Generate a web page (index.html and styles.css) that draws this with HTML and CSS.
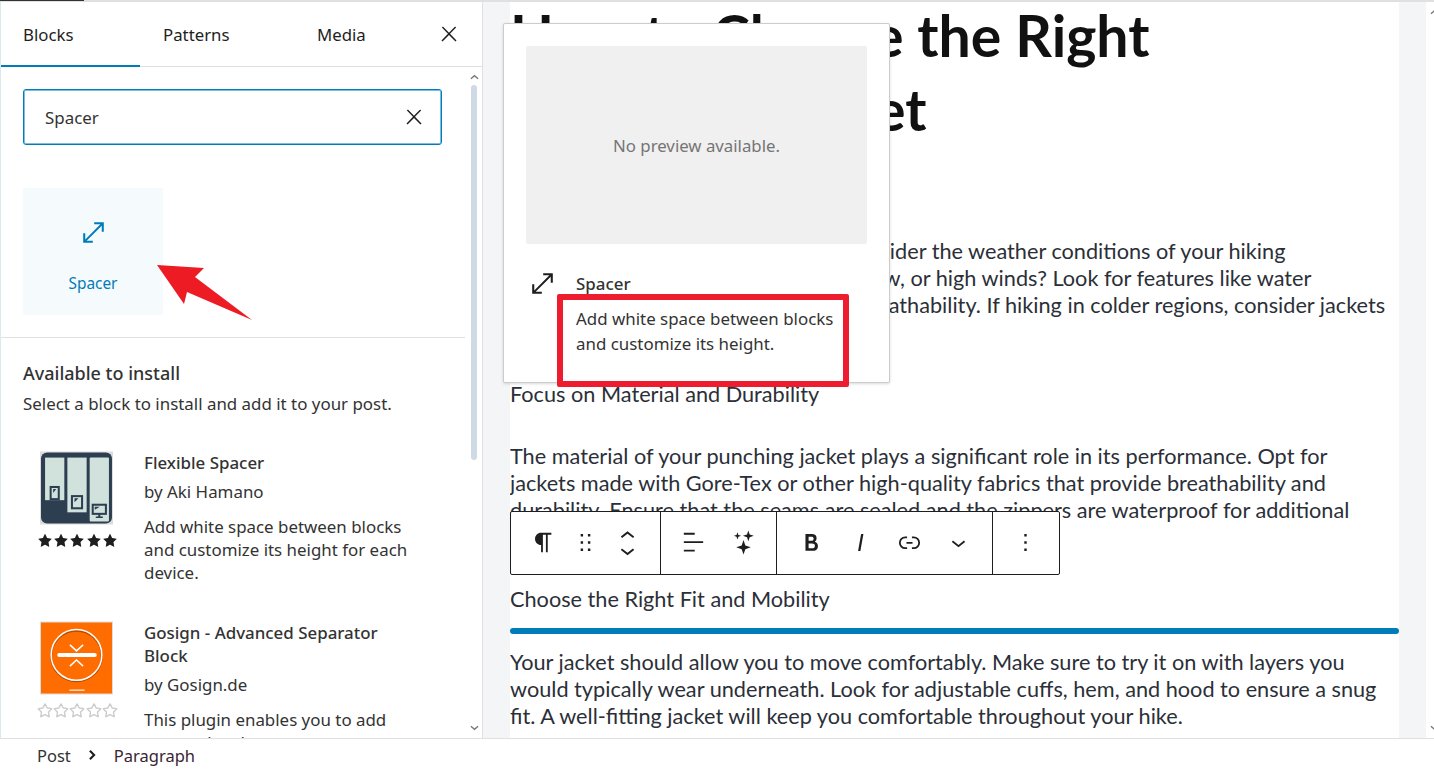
FILE: index.html
```html
<!DOCTYPE html>
<html lang="en">
<head>
    <meta charset="UTF-8">
    <meta name="viewport" content="width=device-width, initial-scale=1.0">
    <title>Edit Post</title>
    <link rel="stylesheet" href="styles.css">
</head>
<body>
    <div class="top-line"><div class="top-line-dark"></div></div>

    <div class="workspace">
        <aside class="sidebar">
            <div class="tabs">
                <div class="tab tab-blocks active">Blocks</div>
                <div class="tab tab-patterns">Patterns</div>
                <div class="tab tab-media">Media</div>
                <svg class="tabs-close" viewBox="0 0 24 24"><path d="M13 11.8l6.1-6.3-1-1-6.1 6.2-6.1-6.2-1 1 6.1 6.3-6.5 6.7 1 1 6.5-6.6 6.5 6.6 1-1z"/></svg>
            </div>

            <div class="sidebar-body">
                <div class="panel">
                    <div class="search">
                        <span>Spacer</span>
                        <svg class="search-close" viewBox="0 0 24 24"><path d="M13 11.8l6.1-6.3-1-1-6.1 6.2-6.1-6.2-1 1 6.1 6.3-6.5 6.7 1 1 6.5-6.6 6.5 6.6 1-1z"/></svg>
                    </div>

                    <div class="block-result">
                        <svg class="block-result-icon" viewBox="0 0 24 24"><path d="M7 18h4.5v1.5h-7v-7H6V17L17 6h-4.5V4.5h7v7H18V7L7 18Z"/></svg>
                        <div>Spacer</div>
                    </div>

                    <div class="install">
                        <h2>Available to install</h2>
                        <p class="install-hint">Select a block to install and add it to your post.</p>

                        <div class="plugin">
                            <div class="plugin-side">
                                <svg class="plugin-icon" viewBox="0 0 72 72">
                                    <rect width="72" height="72" fill="#dcdcdc"/>
                                    <rect x="1" y="1" width="70" height="70" rx="6" fill="#2c3e50"/>
                                    <rect x="5" y="6" width="19" height="42" fill="#d1e2dc"/>
                                    <rect x="27" y="6" width="19" height="54" fill="#d1e2dc"/>
                                    <rect x="49" y="6" width="19" height="63" rx="1" fill="#d1e2dc"/>
                                    <rect x="10.500" y="35" width="8" height="12" fill="#d1e2dc" stroke="#2c3e50" stroke-width="2"/>
                                    <path d="M13 37h3l-3 4z" fill="#2c3e50"/>
                                    <rect x="31.500" y="44" width="10" height="12" fill="#d1e2dc" stroke="#2c3e50" stroke-width="2"/>
                                    <path d="M34 46h4l-4 4z" fill="#2c3e50"/>
                                    <rect x="52" y="52.500" width="13" height="9" fill="#d1e2dc" stroke="#2c3e50" stroke-width="2"/>
                                    <path d="M54 54.500h5l-5 3z" fill="#2c3e50"/>
                                    <path d="M57.500 62h2v2h2.500v1.500h-7V64h2.500z" fill="#2c3e50"/>
                                </svg>
                                <div class="stars">
                                    <svg viewBox="0 0 24 24"><path class="star" d="M11.776 4.454a.25.25 0 01.448 0l2.069 4.192a.25.25 0 00.188.137l4.626.672a.25.25 0 01.139.426l-3.348 3.263a.25.25 0 00-.072.222l.79 4.607a.25.25 0 01-.362.263l-4.138-2.175a.25.25 0 00-.232 0l-4.138 2.175a.25.25 0 01-.363-.263l.79-4.607a.25.25 0 00-.071-.222L4.754 9.881a.25.25 0 01.139-.426l4.626-.672a.25.25 0 00.188-.137l2.069-4.192z"/></svg>
                                    <svg viewBox="0 0 24 24"><path class="star" d="M11.776 4.454a.25.25 0 01.448 0l2.069 4.192a.25.25 0 00.188.137l4.626.672a.25.25 0 01.139.426l-3.348 3.263a.25.25 0 00-.072.222l.79 4.607a.25.25 0 01-.362.263l-4.138-2.175a.25.25 0 00-.232 0l-4.138 2.175a.25.25 0 01-.363-.263l.79-4.607a.25.25 0 00-.071-.222L4.754 9.881a.25.25 0 01.139-.426l4.626-.672a.25.25 0 00.188-.137l2.069-4.192z"/></svg>
                                    <svg viewBox="0 0 24 24"><path class="star" d="M11.776 4.454a.25.25 0 01.448 0l2.069 4.192a.25.25 0 00.188.137l4.626.672a.25.25 0 01.139.426l-3.348 3.263a.25.25 0 00-.072.222l.79 4.607a.25.25 0 01-.362.263l-4.138-2.175a.25.25 0 00-.232 0l-4.138 2.175a.25.25 0 01-.363-.263l.79-4.607a.25.25 0 00-.071-.222L4.754 9.881a.25.25 0 01.139-.426l4.626-.672a.25.25 0 00.188-.137l2.069-4.192z"/></svg>
                                    <svg viewBox="0 0 24 24"><path class="star" d="M11.776 4.454a.25.25 0 01.448 0l2.069 4.192a.25.25 0 00.188.137l4.626.672a.25.25 0 01.139.426l-3.348 3.263a.25.25 0 00-.072.222l.79 4.607a.25.25 0 01-.362.263l-4.138-2.175a.25.25 0 00-.232 0l-4.138 2.175a.25.25 0 01-.363-.263l.79-4.607a.25.25 0 00-.071-.222L4.754 9.881a.25.25 0 01.139-.426l4.626-.672a.25.25 0 00.188-.137l2.069-4.192z"/></svg>
                                    <svg viewBox="0 0 24 24"><path class="star" d="M11.776 4.454a.25.25 0 01.448 0l2.069 4.192a.25.25 0 00.188.137l4.626.672a.25.25 0 01.139.426l-3.348 3.263a.25.25 0 00-.072.222l.79 4.607a.25.25 0 01-.362.263l-4.138-2.175a.25.25 0 00-.232 0l-4.138 2.175a.25.25 0 01-.363-.263l.79-4.607a.25.25 0 00-.071-.222L4.754 9.881a.25.25 0 01.139-.426l4.626-.672a.25.25 0 00.188-.137l2.069-4.192z"/></svg>
                                </div>
                            </div>
                            <div class="plugin-info">
                                <div class="plugin-title">Flexible Spacer</div>
                                <div class="plugin-author">by Aki Hamano</div>
                                <div class="plugin-desc">Add white space between blocks and customize its height for each device.</div>
                            </div>
                        </div>

                        <div class="plugin">
                            <div class="plugin-side">
                                <svg class="plugin-icon" viewBox="0 0 72 72">
                                    <rect width="72" height="72" fill="#dcdcdc"/>
                                    <rect x="1" y="1" width="70" height="70" fill="#ff6c00"/>
                                    <circle cx="36" cy="34" r="25" fill="none" stroke="#b84e00" stroke-width="2"/>
                                    <circle cx="36" cy="33" r="25" fill="none" stroke="#fff" stroke-width="1.500"/>
                                    <rect x="17" y="31" width="39" height="4" rx="2" fill="#fff"/>
                                    <path d="M29.500 23l6.500 6 6.500-6M29.500 44l6.500-6 6.500 6" fill="none" stroke="#fff" stroke-width="1.500"/>
                                    <rect x="29" y="67" width="15" height="1.500" fill="#ffd9bd"/>
                                </svg>
                                <div class="stars stars-empty">
                                    <svg viewBox="0 0 24 24"><path class="star" d="M11.776 4.454a.25.25 0 01.448 0l2.069 4.192a.25.25 0 00.188.137l4.626.672a.25.25 0 01.139.426l-3.348 3.263a.25.25 0 00-.072.222l.79 4.607a.25.25 0 01-.362.263l-4.138-2.175a.25.25 0 00-.232 0l-4.138 2.175a.25.25 0 01-.363-.263l.79-4.607a.25.25 0 00-.071-.222L4.754 9.881a.25.25 0 01.139-.426l4.626-.672a.25.25 0 00.188-.137l2.069-4.192z"/></svg>
                                    <svg viewBox="0 0 24 24"><path class="star" d="M11.776 4.454a.25.25 0 01.448 0l2.069 4.192a.25.25 0 00.188.137l4.626.672a.25.25 0 01.139.426l-3.348 3.263a.25.25 0 00-.072.222l.79 4.607a.25.25 0 01-.362.263l-4.138-2.175a.25.25 0 00-.232 0l-4.138 2.175a.25.25 0 01-.363-.263l.79-4.607a.25.25 0 00-.071-.222L4.754 9.881a.25.25 0 01.139-.426l4.626-.672a.25.25 0 00.188-.137l2.069-4.192z"/></svg>
                                    <svg viewBox="0 0 24 24"><path class="star" d="M11.776 4.454a.25.25 0 01.448 0l2.069 4.192a.25.25 0 00.188.137l4.626.672a.25.25 0 01.139.426l-3.348 3.263a.25.25 0 00-.072.222l.79 4.607a.25.25 0 01-.362.263l-4.138-2.175a.25.25 0 00-.232 0l-4.138 2.175a.25.25 0 01-.363-.263l.79-4.607a.25.25 0 00-.071-.222L4.754 9.881a.25.25 0 01.139-.426l4.626-.672a.25.25 0 00.188-.137l2.069-4.192z"/></svg>
                                    <svg viewBox="0 0 24 24"><path class="star" d="M11.776 4.454a.25.25 0 01.448 0l2.069 4.192a.25.25 0 00.188.137l4.626.672a.25.25 0 01.139.426l-3.348 3.263a.25.25 0 00-.072.222l.79 4.607a.25.25 0 01-.362.263l-4.138-2.175a.25.25 0 00-.232 0l-4.138 2.175a.25.25 0 01-.363-.263l.79-4.607a.25.25 0 00-.071-.222L4.754 9.881a.25.25 0 01.139-.426l4.626-.672a.25.25 0 00.188-.137l2.069-4.192z"/></svg>
                                    <svg viewBox="0 0 24 24"><path class="star" d="M11.776 4.454a.25.25 0 01.448 0l2.069 4.192a.25.25 0 00.188.137l4.626.672a.25.25 0 01.139.426l-3.348 3.263a.25.25 0 00-.072.222l.79 4.607a.25.25 0 01-.362.263l-4.138-2.175a.25.25 0 00-.232 0l-4.138 2.175a.25.25 0 01-.363-.263l.79-4.607a.25.25 0 00-.071-.222L4.754 9.881a.25.25 0 01.139-.426l4.626-.672a.25.25 0 00.188-.137l2.069-4.192z"/></svg>
                                </div>
                            </div>
                            <div class="plugin-info">
                                <div class="plugin-title">Gosign - Advanced Separator Block</div>
                                <div class="plugin-author">by Gosign.de</div>
                                <div class="plugin-desc">This plugin enables you to add custom borders or separators between blocks.</div>
                            </div>
                        </div>
                    </div>
                </div>

                <div class="scrollbar">
                    <svg class="scroll-arrow" viewBox="0 0 10 6"><path d="M1 5l4-3.500L9 5"/></svg>
                    <div class="scroll-track"><div class="scroll-thumb"></div></div>
                    <svg class="scroll-arrow" viewBox="0 0 10 6"><path d="M1 1l4 3.500L9 1"/></svg>
                </div>
            </div>
        </aside>

        <main class="editor">
            <div class="canvas">
                <h1>How to Choose the Right<br><span class="title-second">Punching Jacket</span></h1>
                <p>When wearing a jacket, you should consider the weather conditions of your hiking<br>
                destination. Will there be hard rain, snow, or high winds? Look for features like water<br>
                resistance, nice insulation, and great breathability. If hiking in colder regions, consider jackets<br>
                with extra insulation.</p>
                <p>Focus on Material and Durability</p>
                <p>The material of your punching jacket plays a significant role in its performance. Opt for<br>
                jackets made with Gore-Tex or other high-quality fabrics that provide breathability and<br>
                durability. Ensure that the seams are sealed and the zippers are waterproof for additional<br>
                protection.</p>
                <p class="before-bar">Choose the Right Fit and Mobility</p>
                <div class="bar"></div>
                <p>Your jacket should allow you to move comfortably. Make sure to try it on with layers you<br>
                would typically wear underneath. Look for adjustable cuffs, hem, and hood to ensure a snug<br>
                fit. A well-fitting jacket will keep you comfortable throughout your hike.</p>
            </div>
            <div class="editor-scrollbar">
                <svg class="scroll-arrow" viewBox="0 0 10 6"><path d="M1 5l4-3.500L9 5"/></svg>
                <svg class="scroll-arrow" viewBox="0 0 10 6"><path d="M1 1l4 3.500L9 1"/></svg>
            </div>

            <div class="toolbar">
                <div class="tool-group group-block">
                    <svg class="tool-icon" viewBox="0 0 24 24"><path d="m9.99609 14v-.2251l.00391.0001v6.225h1.5v-14.5h2.5v14.5h1.5v-14.5h3v-1.5h-8.50391c-2.76142 0-5 2.23858-5 5 0 2.7614 2.23858 5 5 5z"/></svg>
                    <svg class="tool-icon" viewBox="0 0 24 24"><path d="M8 7h2V5H8v2zm0 6h2v-2H8v2zm0 6h2v-2H8v2zm6-14v2h2V5h-2zm0 8h2v-2h-2v2zm0 6h2v-2h-2v2z"/></svg>
                    <div class="movers">
                        <svg viewBox="0 0 24 12"><path d="M6.500 10.400L12 6l5.500 4.400-.9 1.200L12 8l-4.500 3.600-1-1.200z"/></svg>
                        <svg viewBox="0 0 24 12"><path d="M17.500 1.600L12 6 6.500 1.600l.9-1.200L12 4l4.500-3.600 1 1.200z"/></svg>
                    </div>
                </div>
                <div class="tool-group group-align">
                    <svg class="tool-icon" viewBox="0 0 24 24"><path d="M13 5.500H4V4h9v1.500Zm7 7H4V11h16v1.500Zm-7 7H4V18h9v1.500Z"/></svg>
                    <svg class="tool-icon" viewBox="0 0 24 24"><path d="M16 3l1.100 3.400L20.500 7.500l-3.400 1.100L16 12l-1.100-3.400-3.400-1.100 3.400-1.100zM7 4.500l.8 2.200 2.200.8-2.200.8L7 10.500l-.8-2.200-2.200-.8 2.200-.8zM12 11l1.500 4.500L18 17l-4.500 1.500L12 23l-1.500-4.500L6 17l4.500-1.500z" transform="translate(0 -1)"/></svg>
                </div>
                <div class="tool-group group-format">
                    <svg class="tool-icon" viewBox="0 0 24 24"><path d="M14.700 11.300c1-.6 1.500-1.600 1.500-3 0-2.300-1.300-3.400-4-3.400H7v14h5.800c1.400 0 2.500-.3 3.300-1 .8-.7 1.200-1.700 1.200-2.900.1-1.900-.8-3.100-2.600-3.700zm-5.100-4h2.300c.6 0 1.100.1 1.400.4.3.3.5.7.5 1.200s-.2 1-.5 1.200c-.3.3-.8.4-1.400.4H9.600V7.300zm4.600 9c-.4.3-1 .4-1.700.4H9.600v-3.900h2.900c.7 0 1.300.2 1.700.5.4.3.6.8.6 1.500s-.2 1.200-.6 1.500z"/></svg>
                    <svg class="tool-icon" viewBox="0 0 24 24"><path d="M12.500 5L10 19h1.900l2.500-14z"/></svg>
                    <svg class="tool-icon" viewBox="0 0 24 24"><path d="M10 17.389H8.444A5.194 5.194 0 1 1 8.444 7H10v1.500H8.444a3.694 3.694 0 0 0 0 7.389H10v1.500ZM14 7h1.556a5.194 5.194 0 0 1 0 10.390H14v-1.500h1.556a3.694 3.694 0 0 0 0-7.390H14V7Zm-4.500 6h5v-1.500h-5V13Z"/></svg>
                    <svg class="tool-icon" viewBox="0 0 24 24"><path d="M17.500 11.600L12 16l-5.500-4.400.9-1.200L12 14l4.500-3.600 1 1.200z"/></svg>
                </div>
                <div class="tool-group group-more">
                    <svg class="tool-icon" viewBox="0 0 24 24"><path d="M13 19h-2v-2h2v2zm0-6h-2v-2h2v2zm0-6h-2V5h2v2z"/></svg>
                </div>
            </div>
        </main>
    </div>

    <footer class="statusbar">
        <span>Post</span>
        <svg class="crumb-sep" viewBox="0 0 20 20"><path d="M7 4l6 6-6 6"/></svg>
        <span class="crumb-current">Paragraph</span>
    </footer>

    <div class="preview-pop">
        <div class="preview-box">No preview available.</div>
        <div class="preview-card">
            <svg class="preview-icon" viewBox="0 0 24 24"><path d="M7 18h4.500v1.500h-7v-7H6V17L17 6h-4.500V4.500h7v7H18V7L7 18Z"/></svg>
            <div>
                <div class="preview-title">Spacer</div>
                <div class="preview-desc">Add white space between blocks and customize its height.</div>
            </div>
        </div>
    </div>

    <!-- annotations on top of the screenshot -->
    <div class="red-box"></div>
    <svg class="red-arrow" viewBox="0 0 110 70"><polygon points="2,2 49,5 40,14 97,57 32,29 29,41"/></svg>
</body>
</html>
```

FILE: styles.css
```css
* {
    box-sizing: border-box;
}

html, body {
    height: 100%;
}

body {
    margin: 0;
    display: flex;
    flex-direction: column;
    height: 772px;
    overflow: hidden;
    position: relative;
    font-family: "Noto Sans", sans-serif;
    font-size: 16.900px;
    color: #333;
    background: #fff;
}

svg {
    display: block;
    flex: none;
}

.top-line {
    height: 2px;
    background: #e0e0e0;
    flex: none;
}

.top-line-dark {
    width: 84px;
    height: 1px;
    background: #333;
}

.workspace {
    flex: 1;
    display: flex;
    min-height: 0;
}

/* sidebar */
.sidebar {
    width: 483px;
    flex: none;
    display: flex;
    flex-direction: column;
    border-right: 1px solid #e0e0e0;
    border-left: 1px solid #dfe7ee;
}

.tabs {
    height: 65px;
    flex: none;
    display: flex;
    align-items: center;
    position: relative;
    border-bottom: 1px solid #e0e0e0;
    font-size: 16.800px;
    color: #1e1e1e;
}

.tab {
    height: 65px;
    line-height: 66px;
    padding-left: 22px;
    flex: none;
}

.tab-blocks {
    width: 139px;
    border-bottom: 2px solid #007cba;
}

.tab-patterns {
    width: 154px;
    padding-left: 23px;
}

.tab-media {
    padding-left: 23px;
}

.tabs-close {
    width: 24px;
    height: 24px;
    margin-left: auto;
    margin-right: 21px;
    fill: #1e1e1e;
}

.sidebar-body {
    flex: 1;
    display: flex;
    min-height: 0;
}

.panel {
    width: 464px;
    flex: none;
    overflow: hidden;
}

.search {
    margin: 22px 0 0 22px;
    width: 419px;
    height: 56px;
    display: flex;
    align-items: center;
    justify-content: space-between;
    padding: 1px 15px 0 21px;
    border: 1px solid #007cba;
    border-radius: 3px;
    box-shadow: inset 0 0 0 1px rgba(0, 124, 186, 0.5);
}

.search-close {
    width: 24px;
    height: 24px;
    margin-top: -1px;
    fill: #1e1e1e;
}

.block-result {
    width: 140px;
    height: 127px;
    margin: 43px 0 22px 22px;
    padding-top: 28px;
    background: #f5fafd;
    border-radius: 2px;
    font-size: 15.400px;
    color: #007cba;
    text-align: center;
}

.block-result-icon {
    width: 33px;
    height: 33px;
    margin: 0 auto 24px;
    fill: #007cba;
}

.install {
    border-top: 1px solid #e0e0e0;
    padding: 23px 22px 0;
}

.install h2 {
    margin: 0;
    font-size: 18px;
    line-height: 25px;
    font-weight: 500;
    color: #333;
}

.install-hint {
    margin: 5px 0 0;
    line-height: 25px;
}

.plugin {
    display: flex;
    margin-top: 35px;
    margin-bottom: 37px;
}

.plugin:last-child {
    margin-bottom: 0;
}

.plugin-side {
    width: 121px;
    flex: none;
    padding-left: 17px;
}

.plugin-icon {
    width: 73px;
    height: 74px;
}

.stars {
    display: flex;
    margin: 5px 0 0 -6px;
    width: 84px;
}

.stars svg {
    width: 22px;
    height: 22px;
    margin-right: -5.800px;
}

.star {
    fill: #1e1e1e;
}

.stars-empty .star {
    fill: #fff;
    stroke: #ccc;
    stroke-width: 1.500;
}

.plugin-info {
    width: 270px;
    line-height: 23px;
}

.plugin-title {
    font-weight: 500;
}

.plugin-author {
    margin-top: 6px;
}

.plugin-desc {
    margin-top: 12px;
}

.scrollbar {
    width: 18px;
    flex: none;
    display: flex;
    flex-direction: column;
    align-items: center;
    padding: 7px 0 7px;
}

.scroll-arrow {
    width: 9px;
    height: 6px;
    fill: none;
    stroke: #777;
    stroke-width: 1.500;
}

.scroll-track {
    flex: 1;
    width: 6px;
    padding-top: 5px;
}

.scroll-thumb {
    height: 375px;
    border-radius: 3px;
    background: #cfdae4;
}

/* editor */
.editor {
    flex: 1;
    min-width: 0;
    display: flex;
    position: relative;
    background: #f4f5f7;
    padding-left: 27px;
    overflow: hidden;
}

.canvas {
    width: 889px;
    flex: none;
    height: 100%;
    overflow: hidden;
    background: #fff;
    font-family: Lato, sans-serif;
    font-size: 21.700px;
    line-height: 27px;
    color: #2b2f38;
}

.canvas h1 {
    margin: -4px 0 92px;
    font-size: 57.200px;
    line-height: 74px;
    font-weight: 700;
    color: #111;
}

.title-second {
    word-spacing: 7px;
}

.canvas p {
    margin: 0 0 35px;
    white-space: nowrap;
}

.canvas p.before-bar {
    margin-bottom: 15px;
}

.bar {
    height: 6px;
    margin-bottom: 15px;
    border-radius: 3px;
    background: #007cba;
}

.editor-scrollbar {
    margin-left: 27px;
    flex: 1;
    background: #fff;
    display: flex;
    flex-direction: column;
    justify-content: space-between;
    align-items: flex-end;
    padding: 7px 0;
}

.editor-scrollbar .scroll-arrow {
    margin-right: -5px;
}

.toolbar {
    position: absolute;
    left: 27px;
    top: 509px;
    width: 550px;
    height: 64px;
    display: flex;
    background: #fff;
    border: 1px solid #1e1e1e;
    border-radius: 2px;
}

.tool-group {
    height: 100%;
    display: flex;
    align-items: center;
    border-right: 1px solid #1e1e1e;
}

.group-block {
    width: 150px;
    padding-left: 18px;
    gap: 13px;
}

.group-align {
    width: 116px;
    padding-left: 18px;
    gap: 21px;
}

.group-format {
    width: 216px;
    padding-left: 20px;
    gap: 20px;
}

.group-more {
    flex: 1;
    border-right: 0;
    padding-left: 18px;
}

.tool-icon {
    width: 29px;
    height: 29px;
    margin-top: -2px;
    fill: #1e1e1e;
}

.movers {
    width: 29px;
    display: flex;
    flex-direction: column;
    gap: 10px;
}

.movers svg {
    width: 29px;
    height: 14.500px;
    fill: #1e1e1e;
}

/* status bar */
.statusbar {
    height: 34px;
    flex: none;
    display: flex;
    align-items: center;
    padding-left: 37px;
    border-top: 1px solid #e0e0e0;
    background: #fff;
    font-size: 16.500px;
    color: #333;
}

.crumb-sep {
    width: 14px;
    height: 14px;
    margin: -2px 15px 0 14px;
    fill: none;
    stroke: #1e1e1e;
    stroke-width: 3;
}

.crumb-current {
    color: #3a2433;
}

/* block preview popover */
.preview-pop {
    position: absolute;
    left: 503px;
    top: 23px;
    width: 387px;
    height: 360px;
    padding: 22px;
    background: #fff;
    border: 1px solid #ccc;
    border-radius: 2px;
    box-shadow: 0 1px 3px rgba(0, 0, 0, 0.15);
}

.preview-box {
    width: 341px;
    height: 198px;
    display: flex;
    align-items: center;
    justify-content: center;
    background: #f0f0f0;
    border-radius: 2px;
    font-size: 16.800px;
    color: #757575;
}

.preview-card {
    display: flex;
    margin-top: 27px;
}

.preview-icon {
    width: 33px;
    height: 33px;
    margin: -4px 17px 0 0;
    fill: #1e1e1e;
}

.preview-title {
    font-weight: 500;
    line-height: 25px;
}

.preview-desc {
    margin-top: 10px;
    line-height: 25px;
    color: #333;
    width: 270px;
}

/* annotations */
.red-box {
    position: absolute;
    left: 557px;
    top: 294px;
    width: 292px;
    height: 93px;
    border: 6px solid #ed1c2e;
    border-radius: 2px;
}

.red-arrow {
    position: absolute;
    left: 155px;
    top: 263px;
    width: 110px;
    height: 70px;
    fill: #ed1c24;
}
```
